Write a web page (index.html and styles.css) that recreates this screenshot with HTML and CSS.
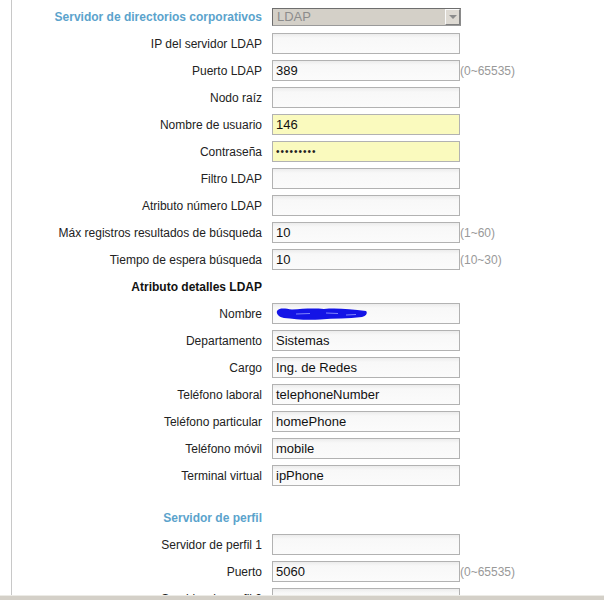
FILE: index.html
```
<!DOCTYPE html>
<html lang="es">
<head>
<meta charset="utf-8">
<link rel="stylesheet" href="styles.css">
</head>
<body>
<div class="page">
  <div class="panel">
    <div class="row">
      <div class="label title">Servidor de directorios corporativos</div>
      <div class="select"><span class="select-text">LDAP</span><span class="select-btn"><span class="tri"></span></span></div>
    </div>
    <div class="row"><div class="label">IP del servidor LDAP</div><div class="input"></div></div>
    <div class="row"><div class="label">Puerto LDAP</div><div class="input">389</div><div class="hint">(0~65535)</div></div>
    <div class="row"><div class="label">Nodo raíz</div><div class="input"></div></div>
    <div class="row"><div class="label">Nombre de usuario</div><div class="input yellow">146</div></div>
    <div class="row"><div class="label">Contraseña</div><div class="input yellow dots">•••••••••</div></div>
    <div class="row"><div class="label">Filtro LDAP</div><div class="input"></div></div>
    <div class="row"><div class="label">Atributo número LDAP</div><div class="input"></div></div>
    <div class="row"><div class="label">Máx registros resultados de búsqueda</div><div class="input">10</div><div class="hint">(1~60)</div></div>
    <div class="row"><div class="label">Tiempo de espera búsqueda</div><div class="input">10</div><div class="hint">(10~30)</div></div>
    <div class="row"><div class="label subtitle">Atributo detalles LDAP</div></div>
    <div class="row"><div class="label">Nombre</div><div class="input"><svg class="scribble" width="92" height="14" viewBox="0 0 92 14"><path d="M1 4 C4 0 10 2 16 2.5 C26 2 36 1 48 2 C60 1 74 2 90 4 C92 6 90 9 86 10 C72 12 58 11 44 12.5 C30 13.5 18 12 8 11 C3 10 0 7 1 4 Z" fill="#1414e6"/><path d="M20 7 L34 6.5 M50 6 L62 6.5 M70 8 L80 7.5" stroke="#9aa0ff" stroke-width="0.8"/></svg></div></div>
    <div class="row"><div class="label">Departamento</div><div class="input">Sistemas</div></div>
    <div class="row"><div class="label">Cargo</div><div class="input">Ing. de Redes</div></div>
    <div class="row"><div class="label">Teléfono laboral</div><div class="input">telephoneNumber</div></div>
    <div class="row"><div class="label">Teléfono particular</div><div class="input">homePhone</div></div>
    <div class="row"><div class="label">Teléfono móvil</div><div class="input">mobile</div></div>
    <div class="row"><div class="label">Terminal virtual</div><div class="input">ipPhone</div></div>
    <div class="spacer"></div>
    <div class="row"><div class="label title">Servidor de perfil</div></div>
    <div class="row"><div class="label">Servidor de perfil 1</div><div class="input"></div></div>
    <div class="row"><div class="label">Puerto</div><div class="input">5060</div><div class="hint">(0~65535)</div></div>
    <div class="row"><div class="label">Servidor de perfil 2</div><div class="input"></div></div>
  </div>
  <div class="bottombar"></div>
</div>
</body>
</html>
```
FILE: styles.css
```
html, body {
  margin: 0;
  padding: 0;
  background: #fff;
  overflow: hidden;
}
body {
  font-family: "Liberation Sans", Arial, sans-serif;
  font-size: 12px;
  color: #222;
}
.page {
  width: 604px;
  height: 600px;
  display: flex;
  flex-direction: column;
  overflow: hidden;
}
.panel {
  margin-left: 11px;
  border-left: 1px solid #c8c8c8;
  height: 595px;
  flex: none;
  overflow: hidden;
  padding-top: 3px;
  box-sizing: border-box;
}
.row {
  display: grid;
  grid-template-columns: 250px 188px auto;
  column-gap: 10px;
  align-items: center;
  height: 27px;
}
.label {
  text-align: right;
  white-space: nowrap;
}
.title {
  color: #5ba3cc;
  font-weight: bold;
}
.subtitle {
  font-weight: bold;
  color: #111;
}
.spacer {
  height: 15px;
}
.input {
  box-sizing: border-box;
  height: 21px;
  border: 1px solid #b2b2b2;
  background: linear-gradient(#ececec, #f8f8f8 4px, #fbfbfb);
  font-size: 13px;
  line-height: 19px;
  padding-left: 3px;
  color: #111;
  white-space: nowrap;
  overflow: hidden;
  display: flex;
  align-items: center;
}
.yellow {
  background: #fafabe;
}
.dots {
  font-size: 10px;
  letter-spacing: 1px;
  color: #222;
}
.scribble {
  display: block;
}
.hint {
  color: #999;
  font-size: 12px;
  margin-left: -10px;
}
.select {
  box-sizing: border-box;
  height: 18px;
  width: 189px;
  border: 1px solid #6e6e6e;
  border-right-color: #8a8a8a;
  border-bottom-color: #9a9a9a;
  background: #d4d0c8;
  display: flex;
  align-items: center;
  justify-content: space-between;
}
.select-text {
  color: #8c8c8c;
  font-size: 13px;
  padding-left: 4px;
}
.select-btn {
  box-sizing: border-box;
  width: 15px;
  height: 16px;
  background: #dedad3;
  border: 1px solid #fafafa;
  border-right-color: #808080;
  border-bottom-color: #808080;
  display: flex;
  align-items: center;
  justify-content: center;
}
.tri {
  width: 0;
  height: 0;
  border-left: 4px solid transparent;
  border-right: 4px solid transparent;
  border-top: 4px solid #8c8c8c;
}
.bottombar {
  flex: none;
  height: 5px;
  border-top: 1px solid #ecebe6;
  background: #d4d0c8;
}
```
